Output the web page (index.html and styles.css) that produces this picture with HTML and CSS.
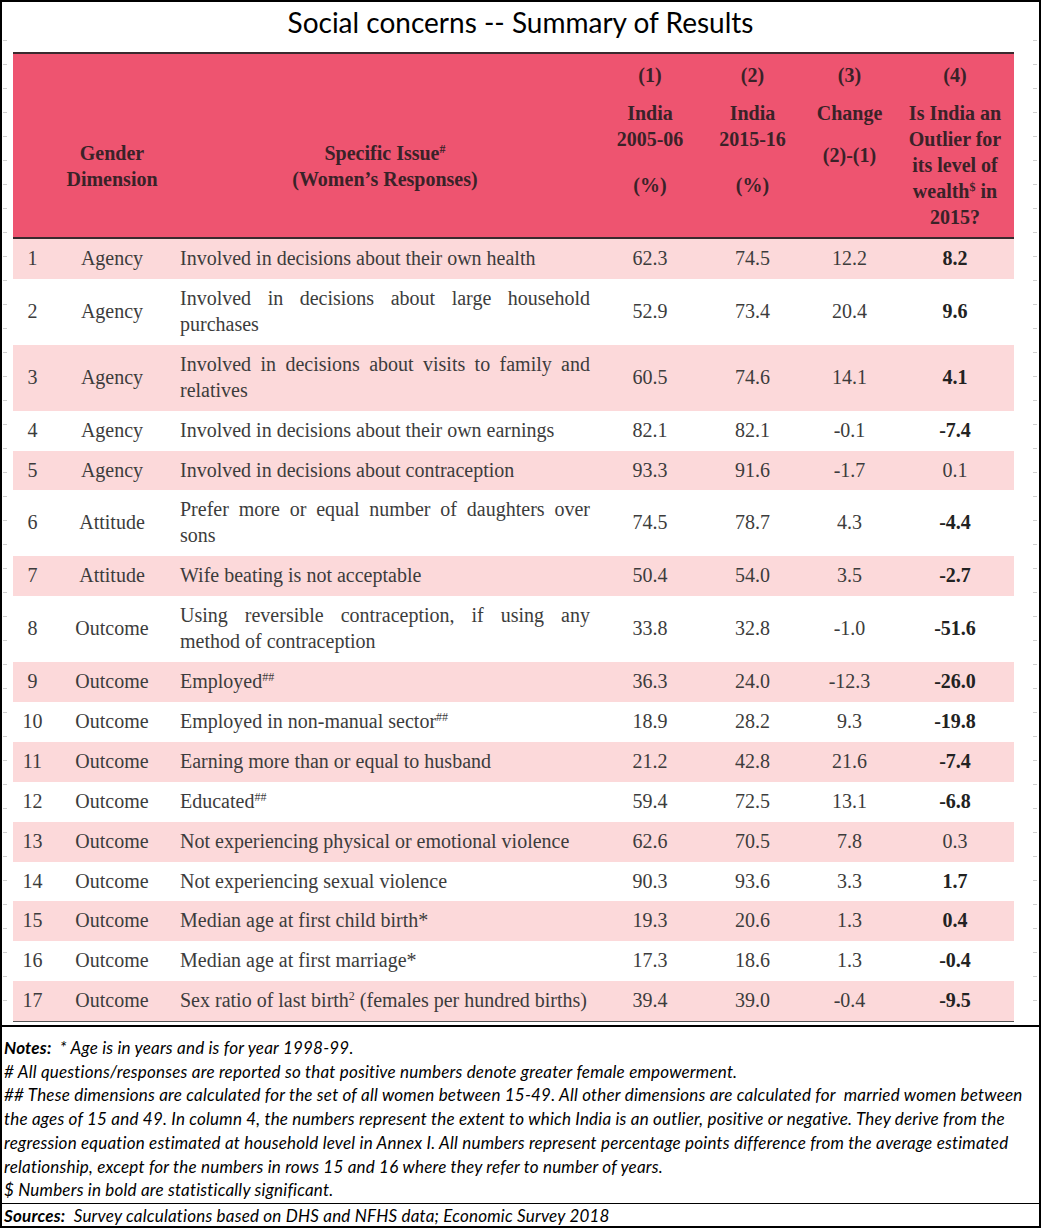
FILE: index.html
```html
<!DOCTYPE html>
<html lang="en">
<head>
<meta charset="utf-8">
<title>Social concerns -- Summary of Results</title>
<link rel="stylesheet" href="styles.css">
</head>
<body>
<div class="page">
  <div class="top">
    <div class="title">Social concerns -- Summary of Results</div>
    <table class="results">
      <colgroup>
        <col class="c-no"><col class="c-dim"><col class="c-issue"><col class="c-v1"><col class="c-v2"><col class="c-v3"><col class="c-v4">
      </colgroup>
      <thead>
        <tr>
          <th></th>
          <th class="h-low"><div>Gender</div><div>Dimension</div></th>
          <th class="h-low"><div>Specific Issue<sup>#</sup></div><div>(Women’s Responses)</div></th>
          <th><div>(1)</div><div class="gap">India</div><div>2005-06</div><div class="gap2">(%)</div></th>
          <th><div>(2)</div><div class="gap">India</div><div>2015-16</div><div class="gap2">(%)</div></th>
          <th><div>(3)</div><div class="gap">Change</div><div class="gap3">(2)-(1)</div></th>
          <th><div>(4)</div><div class="gap">Is India an</div><div>Outlier for</div><div>its level of</div><div>wealth<sup>$</sup> in</div><div>2015?</div></th>
        </tr>
      </thead>
      <tbody>
        <tr><td>1</td><td>Agency</td><td class="issue">Involved in decisions about their own health</td><td>62.3</td><td>74.5</td><td>12.2</td><td class="b">8.2</td></tr>
        <tr><td>2</td><td>Agency</td><td class="issue"><span class="jl">Involved in decisions about large household</span>purchases</td><td>52.9</td><td>73.4</td><td>20.4</td><td class="b">9.6</td></tr>
        <tr><td>3</td><td>Agency</td><td class="issue"><span class="jl">Involved in decisions about visits to family and</span>relatives</td><td>60.5</td><td>74.6</td><td>14.1</td><td class="b">4.1</td></tr>
        <tr><td>4</td><td>Agency</td><td class="issue">Involved in decisions about their own earnings</td><td>82.1</td><td>82.1</td><td>-0.1</td><td class="b">-7.4</td></tr>
        <tr><td>5</td><td>Agency</td><td class="issue">Involved in decisions about contraception</td><td>93.3</td><td>91.6</td><td>-1.7</td><td>0.1</td></tr>
        <tr><td>6</td><td>Attitude</td><td class="issue"><span class="jl">Prefer more or equal number of daughters over</span>sons</td><td>74.5</td><td>78.7</td><td>4.3</td><td class="b">-4.4</td></tr>
        <tr><td>7</td><td>Attitude</td><td class="issue">Wife beating is not acceptable</td><td>50.4</td><td>54.0</td><td>3.5</td><td class="b">-2.7</td></tr>
        <tr><td>8</td><td>Outcome</td><td class="issue"><span class="jl">Using reversible contraception, if using any</span>method of contraception</td><td>33.8</td><td>32.8</td><td>-1.0</td><td class="b">-51.6</td></tr>
        <tr><td>9</td><td>Outcome</td><td class="issue">Employed<sup>##</sup></td><td>36.3</td><td>24.0</td><td>-12.3</td><td class="b">-26.0</td></tr>
        <tr><td>10</td><td>Outcome</td><td class="issue">Employed in non-manual sector<sup>##</sup></td><td>18.9</td><td>28.2</td><td>9.3</td><td class="b">-19.8</td></tr>
        <tr><td>11</td><td>Outcome</td><td class="issue">Earning more than or equal to husband</td><td>21.2</td><td>42.8</td><td>21.6</td><td class="b">-7.4</td></tr>
        <tr><td>12</td><td>Outcome</td><td class="issue">Educated<sup>##</sup></td><td>59.4</td><td>72.5</td><td>13.1</td><td class="b">-6.8</td></tr>
        <tr><td>13</td><td>Outcome</td><td class="issue">Not experiencing physical or emotional violence</td><td>62.6</td><td>70.5</td><td>7.8</td><td>0.3</td></tr>
        <tr><td>14</td><td>Outcome</td><td class="issue">Not experiencing sexual violence</td><td>90.3</td><td>93.6</td><td>3.3</td><td class="b">1.7</td></tr>
        <tr><td>15</td><td>Outcome</td><td class="issue">Median age at first child birth*</td><td>19.3</td><td>20.6</td><td>1.3</td><td class="b">0.4</td></tr>
        <tr><td>16</td><td>Outcome</td><td class="issue">Median age at first marriage*</td><td>17.3</td><td>18.6</td><td>1.3</td><td class="b">-0.4</td></tr>
        <tr><td>17</td><td>Outcome</td><td class="issue">Sex ratio of last birth<sup>2</sup> (females per hundred births)</td><td>39.4</td><td>39.0</td><td>-0.4</td><td class="b">-9.5</td></tr>
      </tbody>
    </table>
  </div>
  <div class="notes">
    <div class="line"><b>Notes:</b>&nbsp; * Age is in years and is for year 1998-99.</div>
    <div class="line"># All questions/responses are reported so that positive numbers denote greater female empowerment.</div>
    <div class="line">## These dimensions are calculated for the set of all women between 15-49. All other dimensions are calculated for &nbsp;married women between</div>
    <div class="line">the ages of 15 and 49. In column 4, the numbers represent the extent to which India is an outlier, positive or negative. They derive from the</div>
    <div class="line">regression equation estimated at household level in Annex I. All numbers represent percentage points difference from the average estimated</div>
    <div class="line">relationship, except for the numbers in rows 15 and 16 where they refer to number of years.</div>
    <div class="line">$ Numbers in bold are statistically significant.</div>
  </div>
  <div class="sources">
    <div class="line"><b>Sources:</b>&nbsp; Survey calculations based on DHS and NFHS data; Economic Survey 2018</div>
  </div>
</div>
</body>
</html>
```
FILE: styles.css
```css
html, body {
  margin: 0;
  padding: 0;
  background: #fff;
}

.page {
  width: 1041px;
  height: 1228px;
  box-sizing: border-box;
  border: 2px solid #000;
  display: flex;
  flex-direction: column;
  background: #fff;
}

.top {
  flex: none;
  height: 1023px;
  box-sizing: border-box;
  background-image:
    repeating-linear-gradient(to bottom, transparent 0 23px, #cfcfcf 23px 24px),
    repeating-linear-gradient(to bottom, transparent 0 23px, #cfcfcf 23px 24px);
  background-repeat: no-repeat, no-repeat;
  background-size: 4px 990px, 4px 990px;
  background-position: left 1px top 15px, right 2px top 15px;
}

.title {
  height: 50px;
  line-height: 40px;
  text-align: center;
  font-family: Lato, "Liberation Sans", sans-serif;
  font-size: 28px;
  color: #000;
}

.results {
  margin-left: 11px;
  width: 1001px;
  border-collapse: collapse;
  table-layout: fixed;
  font-family: "Liberation Serif", "Times New Roman", serif;
  font-size: 20px;
  line-height: 26px;
  color: #3c3c3c;
}

.c-no { width: 39px; }
.c-dim { width: 120px; }
.c-issue { width: 426px; }
.c-v1 { width: 104px; }
.c-v2 { width: 101px; }
.c-v3 { width: 93px; }
.c-v4 { width: 118px; }

.results thead tr {
  background: #ee5470;
  border-top: 2px solid #3a2a2e;
  border-bottom: 2px solid #3a2a2e;
}

.results th {
  vertical-align: top;
  padding: 8px 2px 7px;
  font-weight: bold;
  color: #3a2228;
  text-align: center;
}

.results th.h-low {
  padding-top: 86px;
}

.results th .gap { margin-top: 12px; }
.results th .gap2 { margin-top: 20px; }
.results th .gap3 { margin-top: 16px; }

.results sup {
  font-size: 0.6em;
  line-height: 0;
  vertical-align: 0.6em;
}

.results tbody tr:nth-child(odd) {
  background: #fcd9da;
}

.results tbody tr:last-child {
  border-bottom: 1px solid #555;
}

.results td {
  padding: 6px 8px 7.9px;
  text-align: center;
  vertical-align: middle;
  white-space: nowrap;
}

.results td.issue {
  text-align: left;
}

.results td.b {
  font-weight: bold;
  color: #222;
}

.jl {
  display: block;
  text-align: justify;
  text-align-last: justify;
}

.notes {
  flex: none;
  height: 178px;
  box-sizing: border-box;
  border-top: 2px solid #000;
  padding: 9px 0 0 2px;
}

.sources {
  flex: 1;
  border-top: 1px solid #000;
  padding-left: 2px;
}

.line {
  font-family: Lato, "Liberation Sans", sans-serif;
  font-style: italic;
  font-size: 17px;
  letter-spacing: 0.2px;
  line-height: 23.7px;
  color: #000;
  white-space: nowrap;
}

.line b {
  font-weight: bold;
}
```
